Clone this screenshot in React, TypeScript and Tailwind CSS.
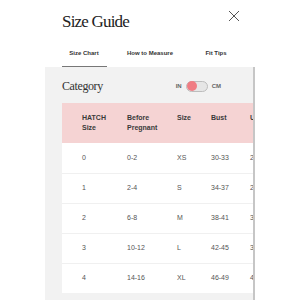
const tabs = ["Size Chart", "How to Measure", "Fit Tips"];

const rows = [
  ["0", "0-2", "XS", "30-33", "26-29"],
  ["1", "2-4", "S", "34-37", "28-31"],
  ["2", "6-8", "M", "38-41", "32-35"],
  ["3", "10-12", "L", "42-45", "36-39"],
  ["4", "14-16", "XL", "46-49", "40-43"],
];

const cols = "grid grid-cols-[45px_50px_34px_39px_60px] pl-[20px]";

export default function App() {
  return (
    <div className="relative w-[300px] h-[300px] overflow-hidden bg-white font-['Liberation_Sans',Arial,sans-serif]">
      <div className="pl-[62px] pt-[12px]">
        <h1 className="font-['Liberation_Serif',serif] text-[17px] leading-[20px] tracking-[-0.8px] text-[#222]">
          Size Guide
        </h1>
      </div>
      <button className="absolute left-[228px] top-[10px]">
        <svg width="12" height="12" viewBox="0 0 12 12" fill="none">
          <path d="M1 1L11 11M11 1L1 11" stroke="#555" strokeWidth="1" />
        </svg>
      </button>

      <div className="flex ml-[51px] mt-[14px]">
        {tabs.map((t, i) => (
          <div key={t} className="w-[66px] h-[21px] flex flex-col items-center justify-between">
            <span className="mt-[3px] text-[6px] leading-[8px] font-bold text-[#333]">{t}</span>
            {i === 0 ? <div className="w-[45px] h-px bg-[#777]" /> : <div />}
          </div>
        ))}
      </div>

      <div className="ml-[45px] w-[210px] min-h-[240px] bg-[#f2f2f2] border-r-2 border-[#c6c6c6] pl-[17px] overflow-hidden">
        <div className="flex items-center justify-between h-[36px] pt-[2px] pr-[32px]">
          <span className="font-['Liberation_Serif',serif] text-[12px] tracking-[-0.4px] text-[#333]">Category</span>
          <div className="flex items-center gap-[4px] text-[6px] font-bold text-[#666]">
            <span>IN</span>
            <div className="w-[22px] h-[11px] rounded-full bg-[#e6e6e6] border border-[#bdbdbd] flex items-center">
              <div className="w-[10px] h-[10px] rounded-full bg-[#f07d84]" />
            </div>
            <span>CM</span>
          </div>
        </div>

        <div className="w-[270px] bg-white">
          <div className={`${cols} h-[40px] items-center bg-[#f5d3d3] text-[7px] leading-[10px] font-bold text-[#3a3a3a]`}>
            <div>HATCH<br />Size</div>
            <div>Before<br />Pregnant</div>
            <div className="self-start mt-[10px]">Size</div>
            <div className="self-start mt-[10px]">Bust</div>
            <div className="self-start mt-[10px]">Underbust</div>
          </div>
          {rows.map((r, i) => (
            <div key={i} className={`${cols} h-[30px] items-center text-[7px] text-[#555] ${i > 0 ? "border-t border-[#f0f0f0]" : ""}`}>
              {r.map((c, j) => (
                <div key={j}>{c}</div>
              ))}
            </div>
          ))}
        </div>
      </div>
    </div>
  );
}
